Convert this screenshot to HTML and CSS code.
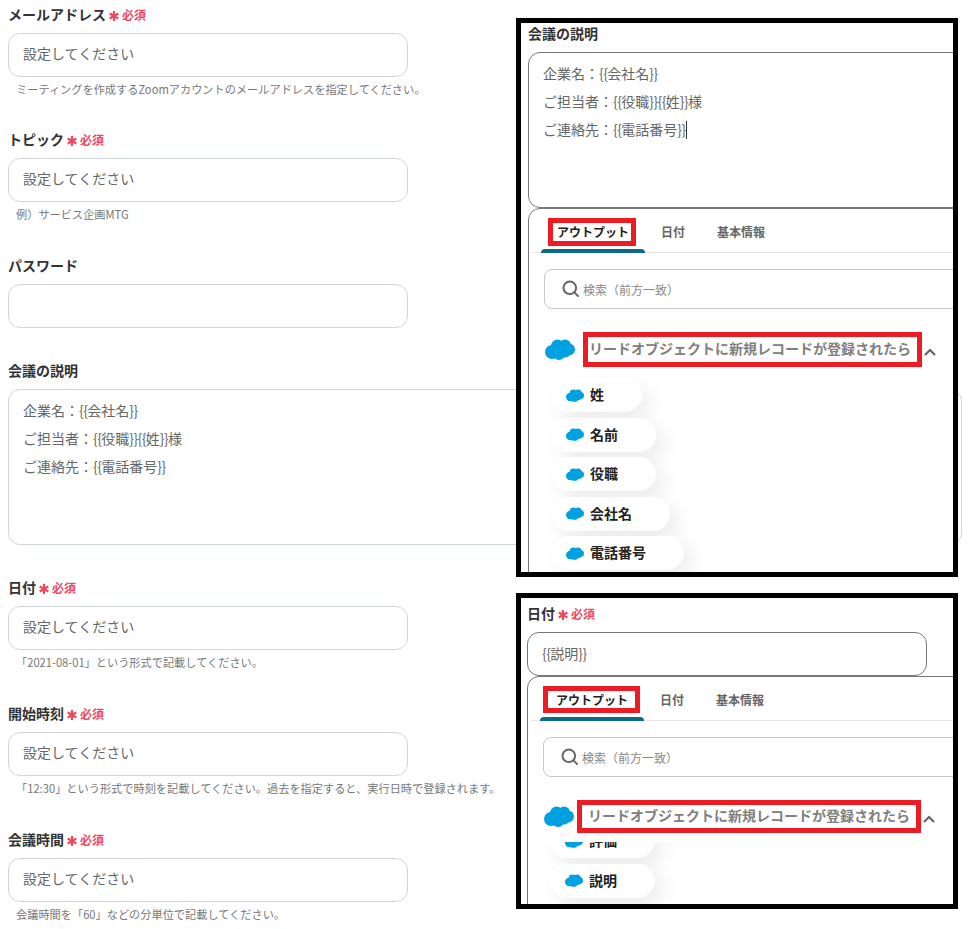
FILE: index.html
```html
<!DOCTYPE html>
<html lang="ja">
<head>
<meta charset="utf-8">
<title>Zoom ミーティング設定</title>
<link rel="stylesheet" href="styles.css">
</head>
<body>
<svg class="defs" width="0" height="0" aria-hidden="true">
  <defs>
    <g id="cloud">
      <circle cx="7" cy="13" r="7"/><circle cx="12.5" cy="7" r="6.5"/><circle cx="20" cy="6.5" r="6"/><circle cx="24" cy="10.5" r="6"/><circle cx="14" cy="14.5" r="6.5"/><circle cx="20" cy="13" r="5.5"/>
    </g>
    <g id="star">
      <path d="M5 0V10M0.7 2.5L9.3 7.5M9.3 2.5L0.7 7.5" fill="none" stroke="currentColor" stroke-width="2.2"/>
    </g>
  </defs>
</svg>
<main class="form">
  <section class="field field-tight">
    <h2 class="label">メールアドレス<span class="req"><svg class="star" viewBox="0 0 10 10"><use href="#star"/></svg>必須</span></h2>
    <div class="input">設定してください</div>
    <p class="hint">ミーティングを作成するZoomアカウントのメールアドレスを指定してください。</p>
  </section>
  <section class="field">
    <h2 class="label">トピック<span class="req"><svg class="star" viewBox="0 0 10 10"><use href="#star"/></svg>必須</span></h2>
    <div class="input">設定してください</div>
    <p class="hint">例）サービス企画MTG</p>
  </section>
  <section class="field">
    <h2 class="label">パスワード</h2>
    <div class="input"></div>
  </section>
  <section class="field">
    <h2 class="label">会議の説明</h2>
    <div class="textarea">
      <div>企業名：<span class="br">{{</span>会社名<span class="br">}}</span></div>
      <div>ご担当者：<span class="br">{{</span>役職<span class="br">}}{{</span>姓<span class="br">}}</span>様</div>
      <div>ご連絡先：<span class="br">{{</span>電話番号<span class="br">}}</span></div>
    </div>
  </section>
  <section class="field">
    <h2 class="label">日付<span class="req"><svg class="star" viewBox="0 0 10 10"><use href="#star"/></svg>必須</span></h2>
    <div class="input">設定してください</div>
    <p class="hint">「2021-08-01」という形式で記載してください。</p>
  </section>
  <section class="field">
    <h2 class="label">開始時刻<span class="req"><svg class="star" viewBox="0 0 10 10"><use href="#star"/></svg>必須</span></h2>
    <div class="input">設定してください</div>
    <p class="hint">「12:30」という形式で時刻を記載してください。過去を指定すると、実行日時で登録されます。</p>
  </section>
  <section class="field">
    <h2 class="label">会議時間<span class="req"><svg class="star" viewBox="0 0 10 10"><use href="#star"/></svg>必須</span></h2>
    <div class="input">設定してください</div>
    <p class="hint">会議時間を「60」などの分単位で記載してください。</p>
  </section>
</main>

<aside class="panel panel-desc">
  <h2 class="label">会議の説明</h2>
  <div class="textarea textarea-active">
    <div>企業名：<span class="br">{{</span>会社名<span class="br">}}</span></div>
    <div>ご担当者：<span class="br">{{</span>役職<span class="br">}}{{</span>姓<span class="br">}}</span>様</div>
    <div>ご連絡先：<span class="br">{{</span>電話番号<span class="br">}}</span><span class="caret"></span></div>
  </div>
  <div class="popup">
    <div class="tabs">
      <div class="tab tab-active"><span class="mark">アウトプット</span></div>
      <div class="tab">日付</div>
      <div class="tab">基本情報</div>
    </div>
    <div class="popup-body">
      <div class="search">
        <svg class="search-icon" viewBox="0 0 18 18"><circle cx="7.8" cy="7.8" r="6.3"/><path d="M12.4 12.4L16.6 16.6"/></svg>
        検索（前方一致）
      </div>
      <div class="group">
        <svg class="cloud" viewBox="0 0 30 21"><use href="#cloud"/></svg>
        <span class="group-title">リードオブジェクトに新規レコードが登録されたら</span>
        <svg class="chevron" viewBox="0 0 12 8"><path d="M1 7L6 2L11 7"/></svg>
      </div>
      <div class="chips chips-desc">
        <div class="chip"><svg class="chip-cloud" viewBox="0 0 30 21"><use href="#cloud"/></svg>姓</div>
        <div class="chip"><svg class="chip-cloud" viewBox="0 0 30 21"><use href="#cloud"/></svg>名前</div>
        <div class="chip"><svg class="chip-cloud" viewBox="0 0 30 21"><use href="#cloud"/></svg>役職</div>
        <div class="chip"><svg class="chip-cloud" viewBox="0 0 30 21"><use href="#cloud"/></svg>会社名</div>
        <div class="chip"><svg class="chip-cloud" viewBox="0 0 30 21"><use href="#cloud"/></svg>電話番号</div>
      </div>
    </div>
  </div>
</aside>

<aside class="panel panel-date">
  <h2 class="label">日付<span class="req"><svg class="star" viewBox="0 0 10 10"><use href="#star"/></svg>必須</span></h2>
  <div class="input input-active"><span class="br">{{</span>説明<span class="br">}}</span></div>
  <div class="popup">
    <div class="tabs">
      <div class="tab tab-active"><span class="mark">アウトプット</span></div>
      <div class="tab">日付</div>
      <div class="tab">基本情報</div>
    </div>
    <div class="popup-body">
      <div class="search">
        <svg class="search-icon" viewBox="0 0 18 18"><circle cx="7.8" cy="7.8" r="6.3"/><path d="M12.4 12.4L16.6 16.6"/></svg>
        検索（前方一致）
      </div>
      <div class="group">
        <svg class="cloud" viewBox="0 0 30 21"><use href="#cloud"/></svg>
        <span class="group-title">リードオブジェクトに新規レコードが登録されたら</span>
        <svg class="chevron" viewBox="0 0 12 8"><path d="M1 7L6 2L11 7"/></svg>
      </div>
      <div class="chips chips-date">
        <div class="chip"><svg class="chip-cloud" viewBox="0 0 30 21"><use href="#cloud"/></svg>評価</div>
        <div class="chip"><svg class="chip-cloud" viewBox="0 0 30 21"><use href="#cloud"/></svg>説明</div>
      </div>
    </div>
  </div>
</aside>
</body>
</html>
```
FILE: styles.css
```css
* { box-sizing: border-box; }
html, body { margin: 0; padding: 0; }
body {
  position: relative;
  width: 973px;
  height: 929px;
  overflow: hidden;
  background: #fff;
  font-family: "Noto Sans CJK JP", "Noto Sans", sans-serif;
  color: #666;
  font-size: 14px;
}
.defs { position: absolute; }
.br { letter-spacing: -0.6px; }
.form { display: flex; flex-direction: column; gap: 33px; padding: 5px 0 0 8px; }
.field-tight { margin-bottom: -1px; }
.label {
  margin: 0 0 8px;
  height: 20px;
  padding-bottom: 2px;
  font-size: 14px;
  line-height: 18px;
  font-weight: 700;
  color: #333;
  display: flex;
  align-items: center;
}
.req {
  display: inline-flex;
  align-items: center;
  margin: 2px 0 0 3px;
  font-size: 12px;
  color: #f0475f;
  line-height: 18px;
}
.star { width: 10px; height: 10px; margin-right: 3px; margin-top: 1px; color: #f0475f; }
.input {
  width: 400px;
  height: 44px;
  border: 1px solid #d0d5dc;
  border-radius: 12px;
  padding: 0 14px;
  line-height: 38px;
  color: #666;
}
.hint {
  margin: 4px 0 0 8px;
  height: 17px;
  font-size: 11.2px;
  line-height: 16px;
  color: #777;
}
.textarea {
  width: 954px;
  height: 156px;
  border: 1px solid #d0d5dc;
  border-radius: 12px;
  padding: 6px 14px;
  line-height: 28px;
}
.panel {
  position: absolute;
  left: 516px;
  width: 442px;
  border: 5px solid #000;
  background: #fff;
  overflow: hidden;
}
.panel-desc { top: 18px; height: 559px; padding: 1px 0 0 7px; }
.panel-date { top: 593px; height: 316px; padding: 6px 0 0 6px; }
.textarea-active, .input-active { border-color: #777; }
.textarea-active { width: 500px; }
.input-active { line-height: 40px; }
.caret {
  display: inline-block;
  width: 1px;
  height: 18px;
  background: #333;
  vertical-align: -4px;
}
.popup {
  width: 500px;
  height: 400px;
  border: 1px solid #777;
  border-radius: 12px 12px 0 0;
}
.tabs {
  display: flex;
  height: 44px;
  margin: 0 3px;
  padding-left: 9px;
  border-bottom: 1px solid #e5e5e5;
}
.tab {
  position: relative;
  padding: 14px 16px 0;
  font-size: 12px;
  line-height: 18px;
  font-weight: 700;
  color: #666;
}
.tab-active { color: #222; }
.tab-active::after {
  content: "";
  position: absolute;
  left: 0;
  right: 0;
  bottom: -1px;
  height: 4px;
  border-radius: 4px 4px 0 0;
  background: #0b6a85;
}
.mark {
  display: inline-block;
  outline: 5px solid #ed1c24;
  background: #fff;
}
.panel-desc .mark { padding: 0 2px 0 4px; margin: 0 -2px 0 -4px; }
.panel-date .mark { padding: 0 7px 0 8px; margin: 0 -7px 0 -8px; height: 17px; }
.popup-body { padding: 16px 0 0 15px; }
.search {
  display: flex;
  align-items: center;
  height: 40px;
  border: 1px solid #c8c8c8;
  border-radius: 8px;
  padding-left: 17px;
  font-size: 12px;
  color: #888;
}
.search-icon {
  width: 18px;
  height: 18px;
  margin-right: 3px;
  fill: none;
  stroke: #666;
  stroke-width: 2;
}
.group {
  display: flex;
  align-items: center;
  margin-top: 23px;
  height: 35px;
}
.panel-date .group { height: 33px; }
.cloud { width: 30px; height: 21px; margin-left: 1px; fill: #00a1e0; flex: none; }
.group-title {
  margin-left: 8px;
  padding: 0 6px 2px 1px;
  border: 5px solid #ed1c24;
  font-size: 14px;
  font-weight: 700;
  line-height: 23px;
  color: #808080;
  white-space: nowrap;
}
.panel-date .group-title { margin-left: 3px; padding-left: 6px; line-height: 21px; }
.chevron {
  width: 12px;
  height: 8px;
  margin: 4px 0 0 2px;
  fill: none;
  stroke: #666;
  stroke-width: 2.2;
}
.chips {
  display: flex;
  flex-direction: column;
  align-items: flex-start;
  gap: 5.5px;
  margin-top: 8px;
  height: 220px;
  overflow: hidden;
  padding: 3px 40px 0 7px;
}
.chips-desc { height: 197px; }
.chips-date { margin-top: 9px; padding-top: 0; }
.chips-date .chip:first-child { margin-top: -18px; }
.chip {
  flex: none;
  display: flex;
  align-items: center;
  height: 34px;
  padding: 0 38px 2px 15px;
  border-radius: 17px;
  background: #fff;
  box-shadow: 8px 8px 20px rgba(0, 0, 0, 0.08);
  font-size: 14px;
  font-weight: 700;
  color: #222;
}
.chip-cloud { width: 18px; height: 13px; margin: 2px 6px 0 0; fill: #00a1e0; flex: none; }
```
